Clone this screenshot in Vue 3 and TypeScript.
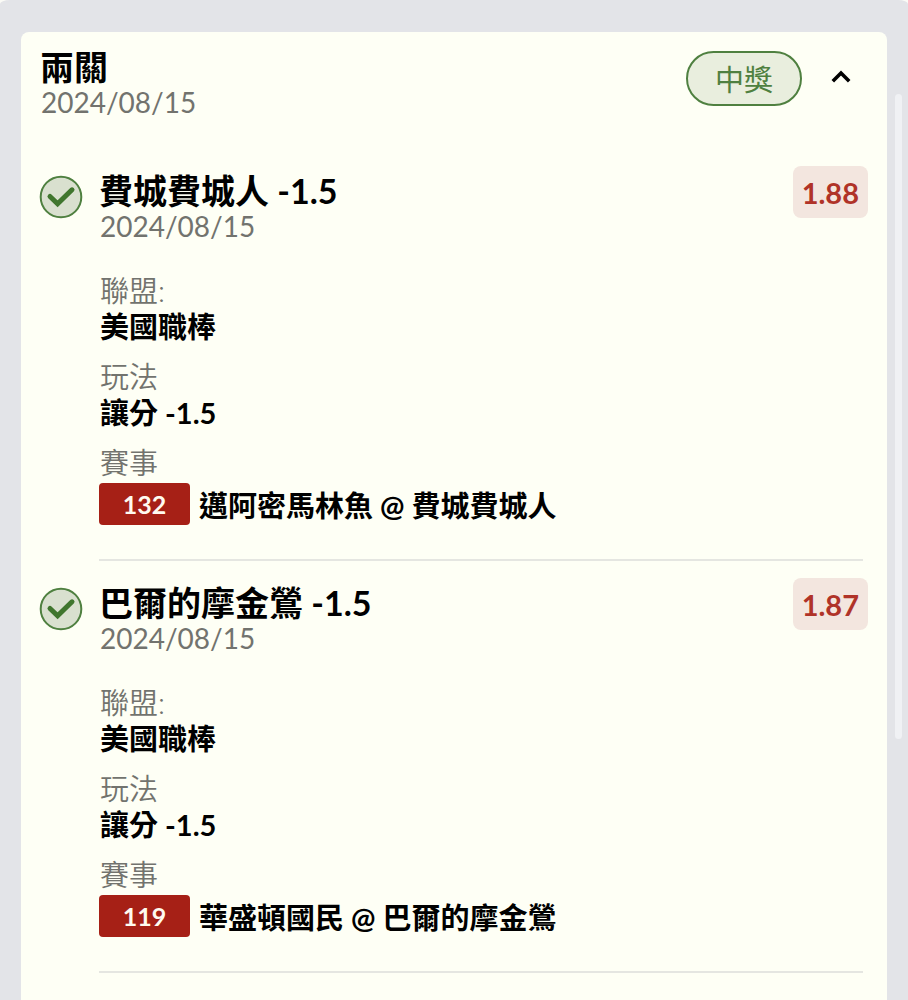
<script setup lang="ts">
import { ref } from 'vue'

interface Leg {
  pick: string
  date: string
  odds: string
  league: string
  market: string
  gameNo: string
  match: string
}

const open = ref(true)

const legs: Leg[] = [
  {
    pick: '費城費城人 -1.5',
    date: '2024/08/15',
    odds: '1.88',
    league: '美國職棒',
    market: '讓分 -1.5',
    gameNo: '132',
    match: '邁阿密馬林魚 @ 費城費城人',
  },
  {
    pick: '巴爾的摩金鶯 -1.5',
    date: '2024/08/15',
    odds: '1.87',
    league: '美國職棒',
    market: '讓分 -1.5',
    gameNo: '119',
    match: '華盛頓國民 @ 巴爾的摩金鶯',
  },
]
</script>

<template>
  <main class="page">
    <section class="card">
      <header class="card-head">
        <div class="heading">
          <h1 class="title">兩關</h1>
          <p class="date">2024/08/15</p>
        </div>
        <span class="status">中獎</span>
        <button class="toggle" type="button" aria-label="收合" :aria-expanded="open" @click="open = !open">
          <svg viewBox="0 0 24 16" width="24" height="16" aria-hidden="true">
            <path d="M3.8 12.2 12 4l8.2 8.2" fill="none" stroke="#000" stroke-width="3.6" />
          </svg>
        </button>
      </header>

      <ul v-if="open" class="legs">
        <li v-for="leg in legs" :key="leg.gameNo" class="leg">
          <svg class="check" viewBox="0 0 44 44" width="44" height="44" aria-hidden="true">
            <circle cx="22" cy="22" r="20.3" fill="#d9e0cf" stroke="#4f8040" stroke-width="2" />
            <path d="M11 21.5 18.6 28.8 33 14.8" fill="none" stroke="#40762e" stroke-width="5" stroke-linecap="round" />
          </svg>
          <div class="body">
            <div class="leg-head">
              <div class="heading">
                <h2 class="title">{{ leg.pick }}</h2>
                <p class="date">{{ leg.date }}</p>
              </div>
              <span class="odds">{{ leg.odds }}</span>
            </div>
            <dl class="fields">
              <div>
                <dt>聯盟:</dt>
                <dd>{{ leg.league }}</dd>
              </div>
              <div>
                <dt>玩法</dt>
                <dd>{{ leg.market }}</dd>
              </div>
              <div>
                <dt>賽事</dt>
                <dd class="match">
                  <span class="game-no">{{ leg.gameNo }}</span>
                  <span class="teams">{{ leg.match }}</span>
                </dd>
              </div>
            </dl>
          </div>
        </li>
      </ul>
    </section>
    <div class="scrollbar"></div>
  </main>
</template>

<style>
body {
  margin: 0;
  background: #fbfbf6;
}
</style>

<style scoped>
.page {
  position: relative;
  box-sizing: border-box;
  display: flex;
  height: 100vh;
  overflow: hidden;
  padding: 32px 21px 0;
  background: #e3e4e8;
  border-radius: 10px 10px 0 0 / 4px 4px 0 0;
  font-family: Lato, "Noto Sans CJK TC", sans-serif;
  font-size: 29px;
  line-height: 36px;
  color: #000;
}
h1, h2, p, ul, dl, dd {
  margin: 0;
  padding: 0;
}
.card {
  flex: 1;
  min-width: 0;
  min-height: 100vh;
  box-sizing: border-box;
  padding: 18px 19px;
  background: #fefff5;
  border-radius: 8px;
}
.card-head {
  display: flex;
  align-items: flex-start;
}
.heading {
  flex: 1;
  min-width: 0;
}
.title {
  font-size: 34px;
  line-height: 34px;
  font-weight: 700;
}
.date {
  padding-left: 1px;
  font-size: 28px;
  color: #72736e;
}
.status {
  box-sizing: border-box;
  margin-top: 1px;
  padding: 9px 27px 6px;
  border: 2px solid #4f8040;
  border-radius: 28px;
  background: #e9eede;
  color: #4f8040;
}
.toggle {
  display: flex;
  margin: 19px 15px 0 27px;
  padding: 0;
  border: 0;
  background: none;
  cursor: pointer;
}
.legs {
  margin-top: 46px;
  list-style: none;
}
.leg {
  display: flex;
  align-items: flex-start;
  gap: 16px;
  margin-bottom: 17px;
}
.check {
  flex: none;
  margin: 9px 0 0 -1px;
}
.body {
  flex: 1;
  min-width: 0;
}
.leg-head {
  display: flex;
  align-items: flex-start;
}
.leg-head .heading {
  margin-top: 8px;
}
.odds {
  padding: 9px 9px 7px;
  border-radius: 8px;
  background: #f3e6df;
  color: #b03328;
  font-weight: 700;
}
.fields {
  display: flex;
  flex-direction: column;
  gap: 14px;
  margin-right: 5px;
  padding: 29px 0 34px;
  border-bottom: 2px solid #e5e6e1;
}
dt, dd {
  padding-left: 1px;
}
dt {
  color: #72736e;
  font-weight: 350;
}
dd {
  font-weight: 700;
}
.match {
  display: flex;
  align-items: center;
  gap: 9px;
  margin-top: 2px;
  padding-left: 0;
}
.game-no {
  box-sizing: border-box;
  width: 91px;
  padding: 3px 0;
  border-radius: 4px;
  background: #a62016;
  color: #fffaf0;
  font-size: 25px;
  text-align: center;
}
.teams {
  padding-top: 4px;
}
.scrollbar {
  position: absolute;
  top: 94px;
  right: 6px;
  width: 7px;
  height: 645px;
  border-radius: 4px;
  background: #f0f1f4;
}
</style>
